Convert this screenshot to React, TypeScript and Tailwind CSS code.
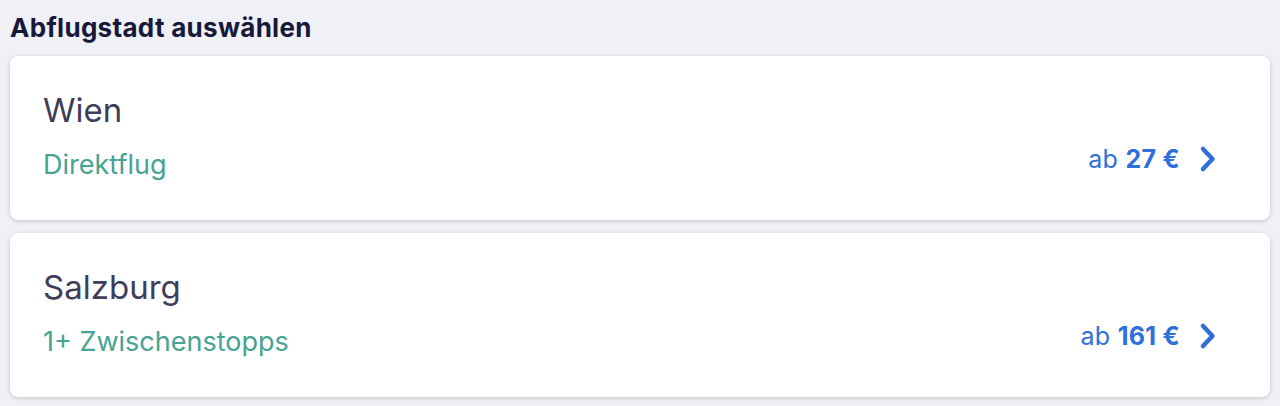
import React from "react";

const font = { fontFamily: "Inter, 'Noto Sans', sans-serif" };

function Chevron() {
  return (
    <svg width="18" height="28" viewBox="0 0 18 28" fill="none" className="ml-[19px]">
      <path d="M4 4 L13.5 14 L4 24" stroke="#2e6fdb" strokeWidth="4.5" strokeLinecap="round" strokeLinejoin="round" />
    </svg>
  );
}

function Card({ city, sub, price }: { city: string; sub: string; price: string }) {
  return (
    <div className="flex h-[164px] items-end justify-between rounded-[8px] bg-white pl-[33px] pr-[53px] pt-[34px] pb-[38px] shadow-[0_1px_4px_rgba(0,0,0,0.2)]">
      <div className="flex flex-col">
        <div className="text-[33px] leading-[40px] text-[#3e3d5a]">{city}</div>
        <div className="mt-[18px] text-[27px] leading-[34px] text-[#47a392]">{sub}</div>
      </div>
      <div className="flex items-center pb-[8px]">
        <span className="text-[25px] leading-[30px] tracking-[0.3px] text-[#2e6fdb]">
          ab <span className="font-bold">{price} €</span>
        </span>
        <Chevron />
      </div>
    </div>
  );
}

export default function App() {
  return (
    <div className="min-h-[406px] w-full bg-[#f0f1f6] px-[10px] pt-[12px]" style={font}>
      <h1 className="text-[26px] font-bold leading-[32px] tracking-[0.3px] text-[#17183a]">Abflugstadt auswählen</h1>
      <div className="mt-[12px] flex flex-col gap-[13px]">
        <Card city="Wien" sub="Direktflug" price="27" />
        <Card city="Salzburg" sub="1+ Zwischenstopps" price="161" />
      </div>
    </div>
  );
}
